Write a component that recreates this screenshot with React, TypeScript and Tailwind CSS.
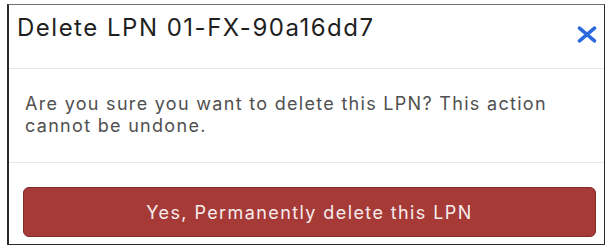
const CloseIcon = () => (
  <svg width="20" height="17" viewBox="0 0 20 17" fill="none" stroke="currentColor" strokeWidth="3.6" strokeLinecap="round">
    <path d="M2.5 2.2 L17.5 14.8" />
    <path d="M17.5 2.2 L2.5 14.8" />
  </svg>
);

const App = () => {
  return (
    <div className="h-[252px] w-[612px] bg-white pl-[7px] pt-[4px]" style={{ fontFamily: 'Inter, "Noto Sans", sans-serif' }}>
      <div className="flex h-[241px] w-[598px] flex-col border border-l-2 border-[#2a2a2a] border-t-[#6f6f6f] bg-white">
        {/* Header */}
        <div className="flex h-[64px] items-start justify-between border-b border-[#e6e6e6] pl-[8px] pr-[7px] pt-[8px]">
          <h2 className="text-[24px] leading-[29px] tracking-[1.5px] font-normal text-[#1f1f1f]">Delete LPN 01-FX-90a16dd7</h2>
          <button className="mt-[13px] text-[#2c69dc]">
            <CloseIcon />
          </button>
        </div>

        {/* Body */}
        <div className="h-[94px] border-b border-[#e6e6e6] pl-[16px] pr-[20px] pt-[24px]">
          <p className="text-[18px] leading-[22px] tracking-[1.3px] text-[#505050]">
            Are you sure you want to delete this LPN? This action cannot be undone.
          </p>
        </div>

        {/* Footer */}
        <div className="flex-1 pl-[14px] pr-[8px] pt-[24px]">
          <button className="flex h-[50px] w-full items-center justify-center rounded-[6px] border border-[#7f2b28] bg-[#a63a37] text-[18px] tracking-[1.4px] text-[#f6ecec]">
            Yes, Permanently delete this LPN
          </button>
        </div>
      </div>
    </div>
  );
};

export default App;
